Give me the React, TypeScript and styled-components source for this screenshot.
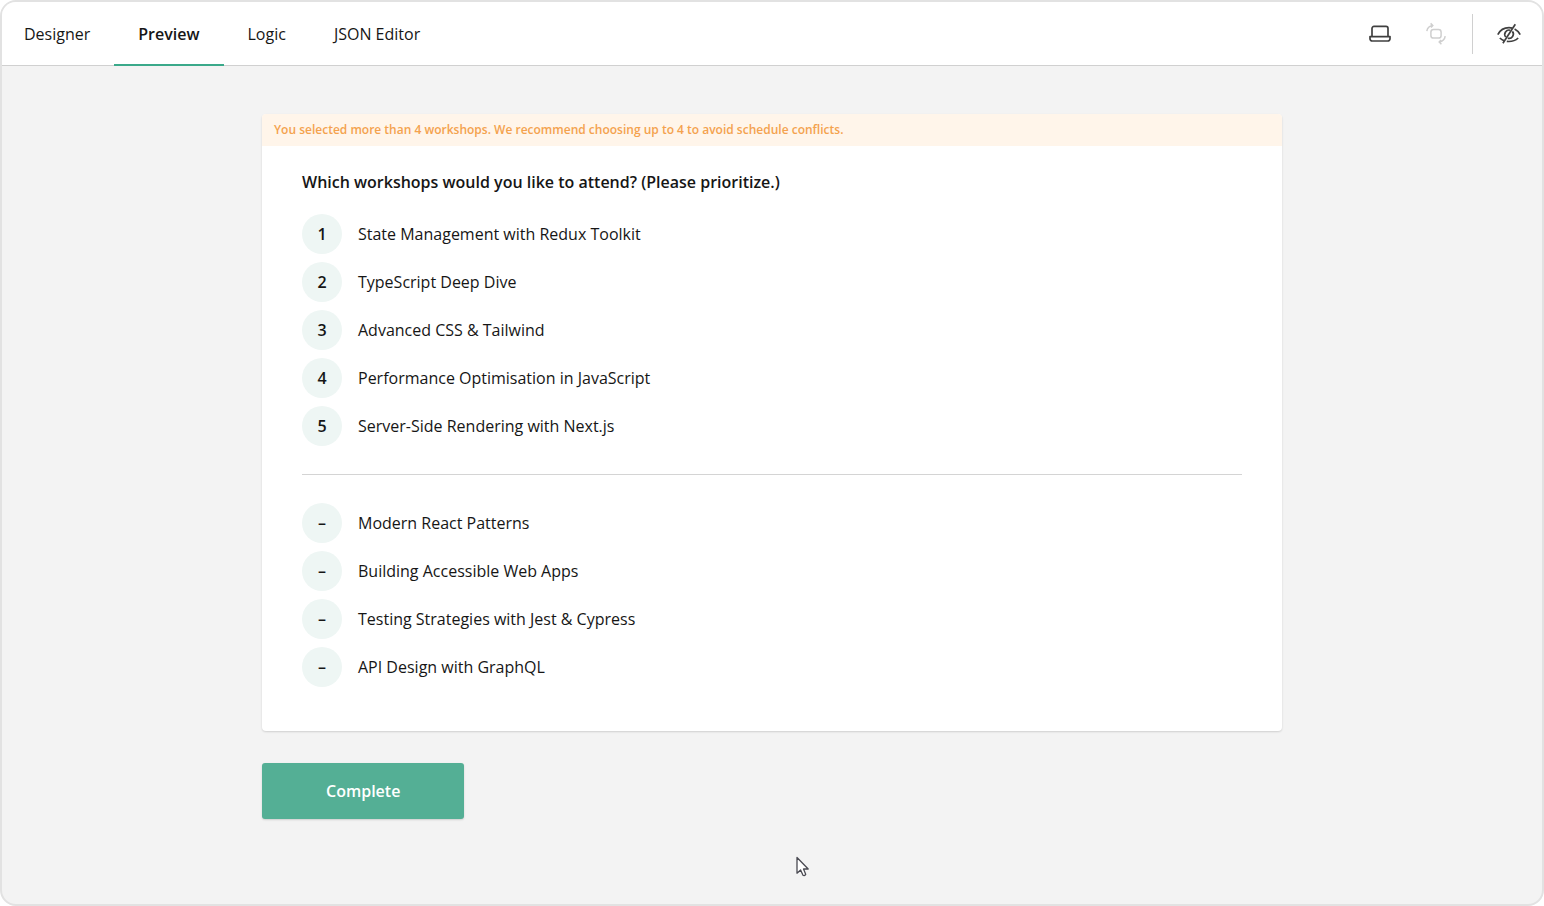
import React from "react";
import styled, { createGlobalStyle } from "styled-components";

const GlobalStyle = createGlobalStyle`
  *, *::before, *::after { box-sizing: border-box; }
  body {
    margin: 0;
    background: #fff;
    color: #161616;
    font-family: "Open Sans", "Noto Sans", sans-serif;
    font-size: 16px;
    line-height: 24px;
  }
`;

const Frame = styled.div`
  display: flex;
  flex-direction: column;
  min-height: 100vh;
  border: 2px solid #e2e2e2;
  border-radius: 16px;
  background: #f3f3f3;
  overflow: hidden;
`;

const Header = styled.header`
  display: flex;
  align-items: stretch;
  justify-content: space-between;
  height: 64px;
  border-bottom: 1px solid #d0d0d0;
  background: #fff;
`;

const Tabs = styled.nav`
  display: flex;
`;

const Tab = styled.button<{ $active?: boolean }>`
  height: 64px;
  padding: 0 24px;
  border: 0;
  box-shadow: inset 0 -2px 0 ${(p) => (p.$active ? "#3aa98a" : "transparent")};
  background: none;
  color: inherit;
  font: inherit;
  font-weight: ${(p) => (p.$active ? 600 : 400)};
  cursor: pointer;

  &:first-child {
    padding-left: 22px;
  }
`;

const Tools = styled.div`
  display: flex;
  align-items: center;
  padding-right: 13px;
`;

const ToolButton = styled.button`
  display: flex;
  align-items: center;
  justify-content: center;
  width: 40px;
  height: 40px;
  margin-right: 16px;
  padding: 0;
  border: 0;
  background: none;
  color: #404040;
  cursor: pointer;

  &:disabled {
    color: #cfcfcf;
  }

  &:last-child {
    margin-right: 0;
  }
`;

const ToolDivider = styled.span`
  width: 1px;
  height: 40px;
  margin-right: 16px;
  background: #d0d0d0;
`;

const Page = styled.main`
  flex: 1;
  width: 100%;
  max-width: 1068px;
  margin: 0 auto;
  padding: 48px 24px;
`;

const Card = styled.section`
  border-radius: 4px;
  background: #fff;
  box-shadow: 0 1px 2px rgba(0, 0, 0, 0.15);
  overflow: hidden;
`;

const Warning = styled.div`
  padding: 8px 12px;
  background: #fff5ea;
  color: #f4a24e;
  font-size: 12px;
  font-weight: 600;
  line-height: 16px;
`;

const Question = styled.div`
  padding: 24px 40px 40px;
`;

const Title = styled.h2`
  margin: 0 0 16px;
  font-size: 16px;
  font-weight: 600;
  line-height: 24px;
`;

const RankList = styled.ol`
  margin: 0;
  padding: 0;
  list-style: none;
`;

const RankItem = styled.li`
  display: flex;
  align-items: center;
  gap: 16px;
  padding: 4px 0;
  cursor: grab;
`;

const RankBadge = styled.span`
  display: flex;
  align-items: center;
  justify-content: center;
  width: 40px;
  height: 40px;
  border-radius: 50%;
  background: #eef6f4;
  font-weight: 600;
`;

const Separator = styled.hr`
  height: 1px;
  margin: 24px 0;
  border: 0;
  background: #d4d4d4;
`;

const CompleteButton = styled.button`
  display: block;
  margin-top: 32px;
  padding: 16px 64px;
  border: 0;
  border-radius: 3px;
  background: #54af95;
  box-shadow: 0 1px 2px rgba(0, 0, 0, 0.15);
  color: #fff;
  font: inherit;
  font-weight: 600;
  cursor: pointer;
`;

const Pointer = styled.svg`
  position: absolute;
  left: 796px;
  top: 856px;
  pointer-events: none;
`;

const LaptopIcon = () => (
  <svg width="24" height="24" viewBox="0 0 24 24" fill="none" stroke="currentColor" strokeWidth="1.7" strokeLinejoin="round" aria-hidden="true">
    <path d="M4 14.500V6.400a2 2 0 0 1 2-2h12a2 2 0 0 1 2 2v8.100" />
    <path d="M2 14.600h20v2.200a2.200 2.200 0 0 1-2.200 2.200H4.200a2.200 2.200 0 0 1-2.200-2.200z" />
  </svg>
);

const RotateIcon = () => (
  <svg width="24" height="24" viewBox="0 0 24 24" fill="none" stroke="currentColor" strokeWidth="1.500" aria-hidden="true">
    <rect x="6.900" y="7.500" width="10.200" height="8.600" rx="2.600" />
    <path d="M2.800 9.200A7 7 0 0 1 8.600 3.600M6.600 1.400l2.200 2.200-1.800 2" />
    <path d="M21.200 14.200a7 7 0 0 1-5.800 5.800M17.400 22.200l-2.200-2.200 1.800-2" />
  </svg>
);

const EyeOffIcon = () => (
  <svg width="24" height="24" viewBox="0 0 24 24" fill="none" stroke="currentColor" strokeWidth="1.700" aria-hidden="true">
    <path d="M.8 12.700C3 8.300 7 5.700 12 5.700c1.200 0 2.300.1 3.300.4M17.600 7c2.400 1.200 4.300 3.100 5.600 5.700" />
    <path d="M2.800 16c1.300 1.300 2.800 2.300 4.500 2.900M9.800 19.400c4.700.5 8.500-.7 11.400-3.400" />
    <path d="M13.200 8.200A4.300 4.300 0 0 0 8.700 15M15.400 9.400A4.300 4.300 0 0 1 10.800 16.200" />
    <path d="M18.300 2.200L5.900 21.300" />
  </svg>
);

const tabs = ["Designer", "Preview", "Logic", "JSON Editor"];

const ranked = [
  "State Management with Redux Toolkit",
  "TypeScript Deep Dive",
  "Advanced CSS & Tailwind",
  "Performance Optimisation in JavaScript",
  "Server-Side Rendering with Next.js",
];

const unranked = [
  "Modern React Patterns",
  "Building Accessible Web Apps",
  "Testing Strategies with Jest & Cypress",
  "API Design with GraphQL",
];

export default function App() {
  return (
    <>
      <GlobalStyle />
      <Frame>
        <Header>
          <Tabs>
            {tabs.map((name) => (
              <Tab key={name} type="button" $active={name === "Preview"}>
                {name}
              </Tab>
            ))}
          </Tabs>
          <Tools>
            <ToolButton type="button" aria-label="Select device">
              <LaptopIcon />
            </ToolButton>
            <ToolButton type="button" aria-label="Rotate device" disabled>
              <RotateIcon />
            </ToolButton>
            <ToolDivider />
            <ToolButton type="button" aria-label="Show invisible elements">
              <EyeOffIcon />
            </ToolButton>
          </Tools>
        </Header>
        <Page>
          <Card>
            <Warning role="status">
              You selected more than 4 workshops. We recommend choosing up to 4 to avoid schedule conflicts.
            </Warning>
            <Question>
              <Title>Which workshops would you like to attend? (Please prioritize.)</Title>
              <RankList>
                {ranked.map((name, i) => (
                  <RankItem key={name}>
                    <RankBadge>{i + 1}</RankBadge>
                    {name}
                  </RankItem>
                ))}
              </RankList>
              <Separator />
              <RankList>
                {unranked.map((name) => (
                  <RankItem key={name}>
                    <RankBadge>–</RankBadge>
                    {name}
                  </RankItem>
                ))}
              </RankList>
            </Question>
          </Card>
          <CompleteButton type="button">Complete</CompleteButton>
        </Page>
      </Frame>
      <Pointer width="14" height="22" viewBox="0 0 14 22" aria-hidden="true">
        <path d="M1 1.500V17.200L4.600 13.900L7 19.300Q8.500 20.200 9.700 18.300L7.500 13H12.200Z" fill="#fff" stroke="#4a4a52" strokeWidth="1.300" strokeLinejoin="round" />
      </Pointer>
    </>
  );
}
